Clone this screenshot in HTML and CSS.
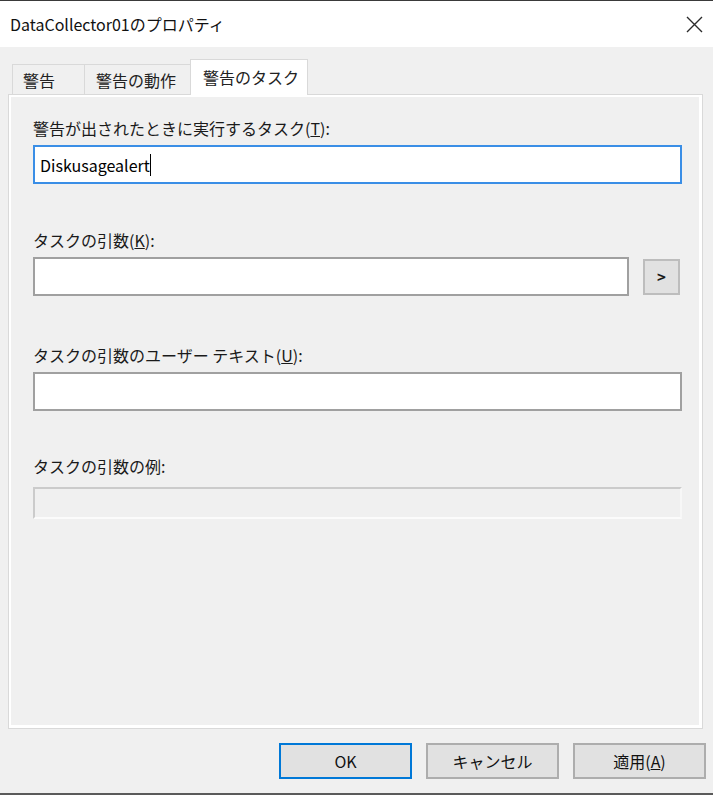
FILE: index.html
```html
<!DOCTYPE html>
<html lang="ja">
<head>
    <meta charset="UTF-8">
    <title>DataCollector01のプロパティ</title>
    <link rel="stylesheet" href="styles.css">
</head>
<body>
<div class="window">
    <div class="titlebar">
        <div class="title">DataCollector01のプロパティ</div>
        <svg class="close" width="17" height="17" viewBox="0 0 17 17">
            <path d="M1 1 L16 16 M16 1 L1 16" stroke="#2b2b2b" stroke-width="1.4" fill="none"/>
        </svg>
    </div>
    <div class="tabs">
        <div class="tab">警告</div>
        <div class="tab tab2">警告の動作</div>
        <div class="tab active">警告のタスク</div>
    </div>
    <div class="panel">
        <div class="field">
            <div class="label">警告が出されたときに実行するタスク(<u>T</u>):</div>
            <div class="input focus"><span class="val">Diskusagealert</span><span class="caret"></span></div>
        </div>
        <div class="field">
            <div class="label">タスクの引数(<u>K</u>):</div>
            <div class="row">
                <div class="input grow"></div>
                <div class="more">&gt;</div>
            </div>
        </div>
        <div class="field third">
            <div class="label">タスクの引数のユーザー テキスト(<u>U</u>):</div>
            <div class="input"></div>
        </div>
        <div class="field last">
            <div class="label">タスクの引数の例:</div>
            <div class="input disabled"></div>
        </div>
    </div>
    <div class="footer">
        <div class="btn default">OK</div>
        <div class="btn">キャンセル</div>
        <div class="btn">適用(<u>A</u>)</div>
    </div>
</div>
</body>
</html>
```
FILE: styles.css
```css
*{
    box-sizing: border-box;
}
html,body{
    margin:0;
    padding:0;
}
body{
    font-family: "Noto Sans CJK JP", "Noto Sans", sans-serif;
    font-size: 16px;
    color: #1a1a1a;
}
.window{
    width:713px;
    height:795px;
    display: flex;
    flex-direction: column;
    background: #f0f0f0;
    border-top:1px solid #3a3a3a;
    border-bottom:2px solid #5a5a5a;
}
.titlebar{
    height:46px;
    background: #fff;
    display: flex;
    align-items: center;
    justify-content: space-between;
    padding:0 10px;
}
.title{
    font-size: 16px;
    color: #111;
}
.close{
    display: block;
}
/* tab strip */
.tabs{
    display: flex;
    align-items: flex-end;
    height:48px;
    padding-left:12px;
    margin-bottom:-1px;
}
.tab{
    height:31px;
    width:73px;
    line-height: 30px;
    padding-left:10px;
    border:1px solid #d9d9d9;
    border-bottom:0;
    background: #f0f0f0;
    color: #222;
}
.tab2{
    width:107px;
    padding-left:11px;
    border-left:0;
}
.active{
    position: relative;
    height:36px;
    width:118px;
    margin-left:-2px;
    padding-left:12px;
    line-height: 34px;
    background: #fff;
    border:1px solid #d9d9d9;
    border-bottom:0;
    z-index: 1;
}
.panel{
    height:635px;
    margin:0 10px 0 8px;
    border:1px solid #d9d9d9;
    box-shadow: inset 2px 2px 0 #fff, inset -3px -3px 0 #fff;
    padding:23px 20px 0 24px;
}
.field{
    margin-top:46px;
}
.field:first-child{
    margin-top:0;
}
.field.third{
    margin-top:49px;
}
.field.last{
    margin-top:45px;
}
.label{
    height:20px;
    line-height: 20px;
    margin-bottom:7px;
    white-space: nowrap;
}
.last .label{
    margin-bottom:11px;
}
.input{
    height:39px;
    background: #fff;
    border:2px solid #a0a0a0;
    padding:0 5px;
    display: flex;
    align-items: center;
}
.input.focus{
    border-color:#3a8ee6;
}
.val{
    color: #000;
}
.caret{
    display: inline-block;
    width:1px;
    height:22px;
    background: #000;
}
.input.disabled{
    height:32px;
    background: #f0f0f0;
    border-color:#cbcbcb #f7f7f7 #fbfbfb #cbcbcb;
}
.row{
    display: flex;
    align-items: center;
    margin-right:2px;
}
.grow{
    flex-grow: 1;
}
.more{
    width:37px;
    height:36px;
    margin-left:14px;
    background: #e1e1e1;
    border:2px solid #bdbdbd;
    text-align: center;
    line-height: 31px;
    font-size: 15px;
    font-weight: bold;
}
.footer{
    display: flex;
    justify-content: flex-end;
    gap:14px;
    padding:14px 7px 0 0;
}
.btn{
    width:133px;
    height:36px;
    background: #e1e1e1;
    border:2px solid #adadad;
    text-align: center;
    line-height: 32px;
    color: #111;
}
.btn.default{
    border-color:#0078d7;
}
```
